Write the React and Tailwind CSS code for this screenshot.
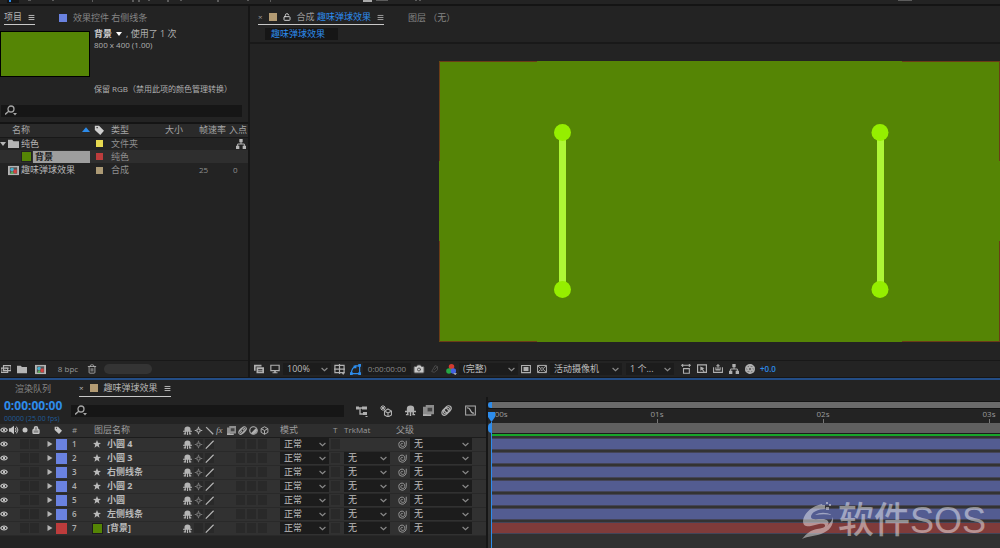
import { Camera, Aperture, Trash2, Lock, LockOpen } from "lucide-react";

const layers = [
    { id: 1, name: "小圆 4", type: "shape" },
    { id: 2, name: "小圆 3", type: "shape" },
    { id: 3, name: "右侧线条", type: "shape" },
    { id: 4, name: "小圆 2", type: "shape" },
    { id: 5, name: "小圆", type: "shape" },
    { id: 6, name: "左侧线条", type: "shape" },
    { id: 7, name: "[背景]", type: "solid" },
];

const glyphs = {
    eye: (
        <>
            <path d="M1 6c2-4 8-4 10 0-2 4-8 4-10 0z" fill="none" stroke="currentColor" strokeWidth="1.6" />
            <circle cx="6" cy="6" r="1.8" />
        </>
    ),
    speaker: (
        <>
            <path d="M0 4h2l4-3v10L2 8H0z" />
            <path d="M7.500 3.500q2 2.500 0 5M9 2q3.500 4 0 8" fill="none" stroke="currentColor" strokeWidth="1.200" />
        </>
    ),
    dot: <circle cx="6" cy="6" r="3" />,
    tag: <path fillRule="evenodd" d="M1 1h5l6 6-4.500 5L1 6zM3 2.500v1.500h1.500V2.500z" />,
    star: <path d="M6 0l1.700 4.200 4.300.2-3.400 2.700 1.200 4.400L6 9l-3.800 2.500 1.200-4.400L0 4.400l4.300-.2z" />,
    menu: <path d="M1 2.500h10M1 6h10M1 9.500h10" stroke="currentColor" strokeWidth="1.700" />,
    shy: (
        <>
            <path d="M2 6.500V4q0-3.500 4-3.500T10 4v2.500z" />
            <path d="M0 7h12M3 7v4M6 6v6M9 7v4M1 10.500h3M8 10.500h3" fill="none" stroke="currentColor" strokeWidth="1.600" />
        </>
    ),
    sun: (
        <>
            <circle cx="6" cy="6" r="2.300" fill="none" stroke="currentColor" strokeWidth="1.600" />
            <path d="M6 1v2M6 9v2M1 6h2M9 6h2" stroke="currentColor" strokeWidth="1.600" />
        </>
    ),
    slash: <path d="M1 11.500L11.500 1" stroke="currentColor" strokeWidth="1.700" />,
    backslash: <path d="M1.500 1.500L11 11" stroke="currentColor" strokeWidth="1.700" />,
    film: (
        <>
            <path d="M0 2h3v10H0zM3 0h9v10H4v2H3z" opacity=".75" />
            <path d="M5 3h5v4H5z" fill="#444" />
            <path d="M0 10h9v2H0z" />
        </>
    ),
    blur: (
        <g fill="none" stroke="currentColor" strokeWidth="1.300">
            <ellipse cx="4.500" cy="7.500" rx="3" ry="4" transform="rotate(45 4.500 7.500)" />
            <ellipse cx="6" cy="6" rx="3" ry="4" transform="rotate(45 6 6)" />
            <ellipse cx="7.500" cy="4.500" rx="3" ry="4" transform="rotate(45 7.500 4.500)" />
        </g>
    ),
    half: (
        <>
            <circle cx="6" cy="6" r="5" fill="none" stroke="currentColor" strokeWidth="1.500" />
            <path d="M9.500 2.500A5 5 0 0 1 2.500 9.500z" />
        </>
    ),
    cube: <path d="M6 1l4.500 2.500v5L6 11 1.500 8.500v-5zM1.500 3.500L6 6l4.500-2.500M6 6v5" fill="none" stroke="currentColor" strokeWidth="1.300" />,
    whip: <path d="M11 1v5c0 3-3 5-5.500 5A4.700 4.700 0 0 1 1 6c0-3 2-4.500 4.500-4.500S9 3.500 9 6 7.500 8.500 6 8.500 3.700 7.500 3.700 6 5 4.300 6.300 4.700" fill="none" stroke="currentColor" strokeWidth="1.300" />,
    search: (
        <>
            <circle cx="6" cy="4" r="3" fill="none" stroke="currentColor" strokeWidth="1.300" />
            <path d="M4 6L0 9.500" stroke="currentColor" strokeWidth="1.400" />
            <path d="M8 8h4l-2 2.500z" />
        </>
    ),
    folder: <path d="M0 2h4.500l1.500 1.500h6V11H0z" />,
    comp: (
        <>
            <path d="M0 1h12v10H0z" />
            <path d="M2 2.500h8v7H2z" fill="#555" />
            <circle cx="4.500" cy="5" r="2" fill="#44b0d0" />
            <path d="M6 5h3.500v4H6z" fill="#d34242" />
            <path d="M2.500 9.500l2-3 2 3z" fill="#59b659" />
        </>
    ),
    flow: (
        <>
            <path d="M4 0h4v4H4zM0 8h4v4H0zM8 8h4v4H8z" />
            <path d="M6 3v3M2 9V6h8v3" fill="none" stroke="currentColor" strokeWidth="1.200" />
        </>
    ),
    stack: <path fillRule="evenodd" d="M0 1h9v2H2v5H0zM3 4h9v7H3zM5 6v1h5V6zM5 8v1h5V8z" />,
    interpret: (
        <>
            <path d="M3 2h9v6H3z M0 5h8v5H0z" fill="none" stroke="currentColor" strokeWidth="1.400" />
            <path d="M5 4.500h5v1H5zM2 7h4v1H2z" />
        </>
    ),
    monitor: (
        <>
            <path d="M1 1.500h10V8H1z" fill="none" stroke="currentColor" strokeWidth="1.400" />
            <path d="M5 8h2v2h2v1H3v-1h2z" />
        </>
    ),
    grid: (
        <>
            <path d="M1 1.500h10v8H1zM6 0v11M0 5.500h12" fill="none" stroke="currentColor" strokeWidth="1.300" />
            <path d="M8 9h4l-2 3z" />
        </>
    ),
    mask: (
        <>
            <path d="M1.500 10.500q0-6 5-8.500h4v8.500z" fill="none" stroke="currentColor" strokeWidth="1.300" />
            <path d="M0 9h3v3H0zM9 9h3v3H9zM9 0h3v3H9zM4 1.500h3v3H4z" />
        </>
    ),
    ghost: <path d="M2 9l4-7 3 1v4l-4 3zM5 7l4-4" fill="none" stroke="currentColor" strokeWidth="1.200" />,
    rgb: (
        <>
            <circle cx="6" cy="3" r="3" fill="#d33b30" />
            <circle cx="3.200" cy="7.500" r="3" fill="#26a845" />
            <circle cx="8" cy="7.500" r="3" fill="#4463e0" />
            <path d="M8 10h4l-2 2z" fill="#ccc" />
        </>
    ),
    roi: (
        <>
            <path d="M.7 1.700h10.600v8.600H.7z" fill="none" stroke="currentColor" strokeWidth="1.300" />
            <path d="M3 3.500h6v5H3z" />
        </>
    ),
    checker: <path d="M.7 1.700h10.600v8.600H.7zM1 2l3 3M11 2L8 5M1 10l3-3M11 10L8 7M4 6l2-2 2 2-2 2z" fill="none" stroke="currentColor" strokeWidth="1.200" />,
    aspect: <path d="M0 1.500h12M2 0v3.500M10 0v3.500M3 5.500h7V11H3z" fill="none" stroke="currentColor" strokeWidth="1.300" />,
    fast: (
        <>
            <path d="M.7 1h10.600v9H.7z" fill="none" stroke="currentColor" strokeWidth="1.400" />
            <path d="M4 3l5 2-2 1 2 3-1 1-2-3-2 1z" />
        </>
    ),
    timeline: <path d="M.7 4v6h10.600V4M3 7h6M3.500 4v3M6 0v7M8.500 4v3M4 2h4" fill="none" stroke="currentColor" strokeWidth="1.300" />,
    mini: (
        <>
            <path d="M0 3h7M4 3v6h4" fill="none" stroke="currentColor" strokeWidth="1.300" />
            <path d="M0 1.500h3v3H0zM6 1.500h5v3H6zM7 7h4v3H7zM9 11h3l-1.500 1.500z" />
        </>
    ),
    draft: (
        <>
            <path d="M8 4l3.500 2v4L8 12l-3.500-2V6zM4.500 6L8 8l3.500-2M8 8v4" fill="none" stroke="currentColor" strokeWidth="1.100" />
            <path d="M3 0v6M0 3h6M1 1l4 4M5 1L1 5" stroke="currentColor" strokeWidth="1" />
        </>
    ),
    graph: (
        <>
            <path d="M.7 1h10.600v10H.7z" fill="none" stroke="currentColor" strokeWidth="1.100" />
            <path d="M2 3q3 0 4 3t4 3" fill="none" stroke="currentColor" strokeWidth="1.200" />
        </>
    ),
    down: <path d="M0 2h12L6 10z" />,
    right: <path d="M1 0l10 6-10 6z" />,
    up: <path d="M0 9l6-7 6 7z" />,
    chevron: <path d="M1 3.500L6 8l5-4.500" fill="none" stroke="currentColor" strokeWidth="2" />,
};

function Glyph({ name, className = "size-2.5" }) {
    return (
        <svg viewBox="0 0 12 12" fill="currentColor" aria-hidden="true" className={`block shrink-0 ${className}`}>
            {glyphs[name]}
        </svg>
    );
}

function IconButton({ label, className = "w-4", children }) {
    return (
        <button type="button" aria-label={label} className={`flex shrink-0 items-center justify-center ${className}`}>
            {children}
        </button>
    );
}

function Dropdown({ label, value, className = "w-12", pad = "pl-1" }) {
    return (
        <div className={`relative h-3 shrink-0 bg-[#1c1c1c] ${className}`}>
            <select
                aria-label={label}
                defaultValue={value}
                className={`block h-3 w-full appearance-none bg-transparent leading-3 text-[#bdbdbd] outline-none ${pad}`}
            >
                <option>{value}</option>
            </select>
            <Glyph name="chevron" className="pointer-events-none absolute top-[3px] right-[3px] size-[7px] text-[#8a8a8a]" />
        </div>
    );
}

function SearchBox({ label, className }) {
    return (
        <label className={`flex h-3 items-center bg-[#161616] pl-1 ${className}`}>
            <Glyph name="search" className="size-3 text-[#a5a5a5]" />
            <input type="text" aria-label={label} className="h-3 min-w-0 flex-1 bg-transparent px-1 outline-none" />
        </label>
    );
}

function TopStrip() {
    return (
        <div className="h-1.5 shrink-0 overflow-hidden border-b-2 border-[#141414] bg-[#232323]">
            <svg width="1000" height="4" aria-hidden="true" className="block">
                <path d="M7 0h12v3H7z" fill="#151515" />
                <path d="M9 0h2v2H9z" fill="#2d8ceb" />
                <path d="M28 0h3v1h-3zM52 0h2v1h-2zM92 0h1v2h-1zM132 0h2v2h-2zM138 0h2v2h-2zM148 0h2v1h-2zM167 0h2v2h-2zM180 0h2v1h-2zM217 0h2v2h-2zM247 0h2v1h-2zM270 0h1v2h-1zM376 0h12v1h-12zM415 0h2v1h-2zM419 0h2v1h-2zM898 0h14v1h-14z" fill="#5c5c5c" />
                <path d="M363 0h9v2h-9z" fill="#aaa" />
            </svg>
        </div>
    );
}

function ProjectPanel() {
    return (
        <section className="flex w-[248px] shrink-0 flex-col bg-[#232323]">
            <div className="flex h-[19px] gap-6 pl-1">
                <button type="button" className="flex items-center gap-1.5 border-b border-[#c8c8c8] pt-1 text-[#b5b5b5]">
                    项目
                    <Glyph name="menu" className="size-[7px]" />
                </button>
                <button type="button" className="flex items-center gap-1.5 pt-1 text-[#858585]">
                    <span className="size-2 bg-[#6a82e0]" />
                    效果控件 右侧线条
                </button>
            </div>
            <div className="flex h-20 gap-1">
                <div className="mt-1.5 h-[46px] w-[90px] border border-black bg-[#558505]" />
                <div className="flex flex-col pt-[3px] whitespace-nowrap text-[#b0b0b0]">
                    <p className="flex items-center gap-1 leading-3">
                        <b className="text-[#d0d0d0]">背景</b>
                        <Glyph name="down" className="size-1.5 text-white" />
                        <span>, 使用了 1 次</span>
                    </p>
                    <p className="text-[8px] leading-[10px]">800 x 400 (1.00)</p>
                    <p className="mt-auto pb-2.5 text-[8px] leading-3">保留 RGB（禁用此项的颜色管理转换）</p>
                </div>
            </div>
            <SearchBox label="搜索项目" className="mr-1.5 ml-px" />
            <table className="mt-[5px] w-full table-fixed border-t-2 border-[#141414] text-left whitespace-nowrap text-[#8f8f8f]">
                <colgroup>
                    <col className="w-[94px]" />
                    <col className="w-[17px]" />
                    <col className="w-[54px]" />
                    <col className="w-[34px]" />
                    <col className="w-[30px]" />
                    <col />
                </colgroup>
                <thead>
                    <tr className="h-3.5 border-b border-[#181818] bg-[#2a2a2a] text-[#a5a5a5]">
                        <th className="p-0 font-normal">
                            <div className="flex h-3 items-center justify-between pr-1 pl-3">
                                名称
                                <Glyph name="up" className="size-2 text-[#2d8ceb]" />
                            </div>
                        </th>
                        <th className="p-0" aria-label="标签"><Glyph name="tag" className="size-2.5 text-[#cfcfcf]" /></th>
                        <th className="p-0 font-normal">类型</th>
                        <th className="p-0 font-normal">大小</th>
                        <th className="p-0 font-normal">帧速率</th>
                        <th className="p-0 font-normal">入点</th>
                    </tr>
                </thead>
                <tbody>
                    <tr className="h-[13px]">
                        <td className="p-0">
                            <div className="flex h-3 items-center text-[#b5b5b5]">
                                <Glyph name="down" className="mr-0.5 size-1.5" />
                                <Glyph name="folder" className="mr-0.5 size-[11px]" />
                                纯色
                            </div>
                        </td>
                        <td className="p-0"><span className="ml-0.5 block size-[7px] bg-[#e6d850]" /></td>
                        <td className="p-0">文件夹</td>
                        <td />
                        <td />
                        <td className="p-0"><Glyph name="flow" className="ml-[7px] size-2.5 text-[#b5b5b5]" /></td>
                    </tr>
                    <tr className="h-[13px] bg-[#2e2e2e]">
                        <td className="p-0">
                            <div className="flex h-3 items-center gap-px pr-1 pl-[21px]">
                                <span className="size-[11px] border border-[#222] bg-[#558505]" />
                                <b className="h-3 flex-1 bg-[#9e9e9e] pl-0.5 leading-3 text-[#1a1a1a]">背景</b>
                            </div>
                        </td>
                        <td className="p-0"><span className="ml-0.5 block size-[7px] bg-[#bd3c3c]" /></td>
                        <td className="p-0">纯色</td>
                        <td colSpan="3" />
                    </tr>
                    <tr className="h-3.5">
                        <td className="p-0">
                            <div className="flex h-3 items-center gap-0.5 pl-2 text-[#b5b5b5]">
                                <Glyph name="comp" className="size-[11px]" />
                                趣味弹球效果
                            </div>
                        </td>
                        <td className="p-0"><span className="ml-0.5 block size-[7px] bg-[#ac9a75]" /></td>
                        <td className="p-0">合成</td>
                        <td />
                        <td className="p-0 text-[8px]">25</td>
                        <td className="p-0 pl-1 text-[8px]">0</td>
                    </tr>
                </tbody>
            </table>
            <div className="mt-auto flex h-[17px] items-center border-t border-[#181818] text-[#b5b5b5]">
                <IconButton label="解释素材" className="w-3"><Glyph name="interpret" /></IconButton>
                <IconButton label="新建文件夹" className="w-5"><Glyph name="folder" /></IconButton>
                <IconButton label="新建合成" className="w-4"><Glyph name="comp" className="size-[11px]" /></IconButton>
                <button type="button" className="w-9 pl-1 text-[8px] text-[#999]">8 bpc</button>
                <IconButton label="删除"><Trash2 className="size-2.5" /></IconButton>
                <span className="ml-1 h-2.5 w-12 rounded-full bg-[#343434]" />
            </div>
        </section>
    );
}

function Artwork() {
    return (
        <svg viewBox="0 0 561 281" role="img" aria-label="趣味弹球效果" className="block w-full">
            <path d="M0 0h561v281H0z" fill="#558505" />
            <path d="M.5 100V.5H98M463 .5h98M.5 180v100.500H98M463 280.500h98M560.500 0v100M560.500 180v101" fill="none" stroke="#6b3c17" />
            <path d="M120 72h7v156h-7zM438 72h7v156h-7z" fill="#aef636" />
            <g fill="#95ee00">
                <circle cx="123.500" cy="71.500" r="8.500" />
                <circle cx="123.500" cy="228.500" r="8.500" />
                <circle cx="441" cy="71.500" r="8.500" />
                <circle cx="441" cy="228.500" r="8.500" />
            </g>
        </svg>
    );
}

function CompositionPanel() {
    return (
        <section className="flex min-w-0 flex-1 flex-col bg-[#232323]">
            <div className="flex h-[19px] items-stretch gap-6 pl-2">
                <button type="button" className="flex items-center gap-1.5 border-b border-[#c8c8c8] pt-1 text-[#9a9a9a]">
                    <span className="text-[8px]">×</span>
                    <span className="size-2 bg-[#b39b73]" />
                    <LockOpen strokeWidth={3} className="size-2 text-[#cfcfcf]" />
                    <span>合成 <span className="text-[#2d8ceb]">趣味弹球效果</span></span>
                    <Glyph name="menu" className="size-[7px]" />
                </button>
                <button type="button" className="pt-1 text-[#858585]">图层 （无）</button>
            </div>
            <div className="flex h-[19px] items-center border-b-2 border-[#191919] pl-[15px]">
                <button type="button" className="h-3 w-[73px] bg-[#161616] pl-1.5 text-left leading-3 text-[#2d8ceb]">趣味弹球效果</button>
            </div>
            <div className="flex-1 overflow-hidden pt-[17px] pb-[18px] pl-[189px]">
                <Artwork />
            </div>
            <div className="flex h-[17px] shrink-0 items-center overflow-hidden border-t border-[#181818] pl-px text-[#b0b0b0]">
                <IconButton label="始终预览"><Glyph name="stack" /></IconButton>
                <IconButton label="主查看器"><Glyph name="monitor" /></IconButton>
                <Dropdown label="缩放" value="100%" />
                <IconButton label="网格"><Glyph name="grid" className="size-[11px]" /></IconButton>
                <IconButton label="蒙版"><Glyph name="mask" className="size-[11px] text-[#2d8ceb]" /></IconButton>
                <button type="button" className="h-3 w-12 bg-[#1c1c1c] text-[8px] leading-3 text-[#8a8a8a]">0:00:00:00</button>
                <IconButton label="快照"><Camera className="size-3 fill-[#c8c8c8] text-[#555]" /></IconButton>
                <IconButton label="显示快照"><Glyph name="ghost" className="size-2.5 text-[#484848]" /></IconButton>
                <IconButton label="通道"><Glyph name="rgb" className="size-[11px]" /></IconButton>
                <Dropdown label="分辨率" value="(完整)" className="w-[59px]" />
                <IconButton label="目标区域"><Glyph name="roi" /></IconButton>
                <IconButton label="透明网格"><Glyph name="checker" /></IconButton>
                <Dropdown label="3D 视图" value="活动摄像机" className="w-[72px]" />
                <Dropdown label="视图布局" value="1 个..." className="ml-1 w-12" />
                <IconButton label="像素长宽比" className="ml-1 w-4"><Glyph name="aspect" /></IconButton>
                <IconButton label="快速预览"><Glyph name="fast" /></IconButton>
                <IconButton label="时间轴"><Glyph name="timeline" /></IconButton>
                <IconButton label="流程图"><Glyph name="flow" /></IconButton>
                <IconButton label="重置曝光度"><Aperture strokeWidth={4} className="size-2.5" /></IconButton>
                <button type="button" className="pl-0.5 text-[8px] font-semibold text-[#2d8ceb]">+0.0</button>
            </div>
        </section>
    );
}

function Cell({ icon, className = "" }) {
    return (
        <span className={`flex h-2.5 w-[9px] shrink-0 items-center justify-center bg-[#292929] ${className}`}>
            {icon && <Glyph name={icon} className="size-[9px]" />}
        </span>
    );
}

function LayerRow({ layer }) {
    const solid = layer.type === "solid";
    return (
        <tr className="h-3.5 border-b border-[#292929] bg-[#313131]">
            <td className="p-0">
                <div className="flex items-center gap-px">
                    <IconButton label={`显示 ${layer.name}`} className="w-2"><Glyph name="eye" className="size-2 text-[#c8c8c8]" /></IconButton>
                    <span className="w-2.5" />
                    <Cell />
                    <Cell />
                </div>
            </td>
            <td className="p-0"><Glyph name="right" className="mx-auto size-1.5 text-[#b5b5b5]" /></td>
            <td className="p-0"><span className={`mx-auto block size-[11px] ${solid ? "bg-[#bd3c3c]" : "bg-[#6a82e0]"}`} /></td>
            <td className="p-0 pl-1 text-[8px] font-semibold text-[#b0b0b0]">{layer.id}</td>
            <td className="p-0">
                <div className="flex items-center gap-1 font-bold text-[#bababa]">
                    <span className="flex w-[15px] justify-end">
                        {solid ? <span className="size-[11px] border border-[#1c1c1c] bg-[#558505]" /> : <Glyph name="star" className="mr-0.5 size-2" />}
                    </span>
                    {layer.name}
                </div>
            </td>
            <td className="p-0">
                <div className="flex gap-0.5 text-[#b5b5b5]">
                    <Cell icon="shy" className="bg-transparent" />
                    <Cell icon={solid ? null : "sun"} className={solid ? "" : "text-[#777]"} />
                    <Cell icon="slash" />
                    <span className="w-[18px]" />
                    <Cell />
                    <Cell />
                    <Cell />
                </div>
            </td>
            <td className="p-0"><Dropdown label={`模式 ${layer.id}`} value="正常" className="mx-0.5" /></td>
            <td className="p-0"><Cell /></td>
            <td className="p-0">{layer.id > 1 && <Dropdown label={`轨道遮罩 ${layer.id}`} value="无" className="w-[46px]" />}</td>
            <td className="p-0">
                <div className="flex items-center gap-0.5 pl-1">
                    <IconButton label={`父级关联器 ${layer.id}`} className="w-3"><Glyph name="whip" className="size-[9px] text-[#959595]" /></IconButton>
                    <Dropdown label={`父级 ${layer.id}`} value="无" className="w-[62px]" />
                </div>
            </td>
        </tr>
    );
}

function LayerTable() {
    return (
        <table className="w-full table-fixed text-left whitespace-nowrap">
            <colgroup>
                <col className="w-[45px]" />
                <col className="w-[9px]" />
                <col className="w-[14px]" />
                <col className="w-5" />
                <col className="w-[95px]" />
                <col className="w-[95px]" />
                <col className="w-[53px]" />
                <col className="w-[13px]" />
                <col className="w-12" />
                <col />
            </colgroup>
            <thead>
                <tr className="h-[13px] border-b border-[#1c1c1c] bg-[#2e2e2e] text-[#9c9c9c]">
                    <th className="p-0" aria-label="A/V 功能">
                        <div className="flex items-center gap-px text-[#c5c5c5]">
                            <Glyph name="eye" className="size-2" />
                            <Glyph name="speaker" className="size-2.5" />
                            <Glyph name="dot" className="size-2.5" />
                            <Lock strokeWidth={4} className="ml-px size-2 fill-[#888]" />
                        </div>
                    </th>
                    <th className="p-0" aria-label="展开" />
                    <th className="p-0" aria-label="标签"><Glyph name="tag" className="size-2 text-[#c5c5c5]" /></th>
                    <th className="p-0 pl-1 text-[8px] font-normal">#</th>
                    <th className="p-0 pl-1.5 font-normal">图层名称</th>
                    <th className="p-0 font-normal">
                        <div className="flex items-center gap-0.5 text-[#b0b0b0]">
                            <Glyph name="shy" className="size-[9px]" />
                            <Glyph name="sun" className="size-[9px]" />
                            <Glyph name="backslash" className="size-[9px]" />
                            <i className="w-[9px] font-['Liberation_Serif',serif] leading-3">fx</i>
                            <Glyph name="film" className="size-[9px]" />
                            <Glyph name="blur" className="size-[9px]" />
                            <Glyph name="half" className="size-[9px]" />
                            <Glyph name="cube" className="size-[9px]" />
                        </div>
                    </th>
                    <th className="p-0 pl-0.5 font-normal">模式</th>
                    <th className="p-0 pl-0.5 text-[8px] font-normal">T</th>
                    <th className="p-0 text-[8px] font-normal">TrkMat</th>
                    <th className="p-0 pl-1 font-normal">父级</th>
                </tr>
            </thead>
            <tbody>
                {layers.map((layer) => (
                    <LayerRow key={layer.id} layer={layer} />
                ))}
            </tbody>
        </table>
    );
}

function Tracks() {
    return (
        <div className="relative flex min-w-0 flex-1 flex-col overflow-hidden border-l-2 border-[#161616] bg-[#313131]">
            <div className="h-1 bg-[#232323]" />
            <div className="flex h-2 items-stretch border-y border-[#141414]">
                <span className="w-1 rounded-l-full bg-[#2d8ceb]" />
                <span className="flex-1 bg-[#6a6a6a]" />
            </div>
            <div className="flex h-3.5 overflow-hidden bg-[#232323] text-[8px] text-[#9c9c9c]">
                <span className="w-[86px] shrink-0 leading-[10px]">0:00s</span>
                {["01s", "02s", "03s"].map((mark) => (
                    <span key={mark} className="flex w-[166px] shrink-0 flex-col items-center leading-[10px]">
                        {mark}
                        <span className="h-1 w-px bg-[#777]" />
                    </span>
                ))}
            </div>
            <div className="flex h-2.5 items-stretch">
                <span className="w-1 rounded-l-full bg-[#2d8ceb]" />
                <span className="flex-1 bg-[#606060]" />
            </div>
            <div className="flex flex-col gap-0.5 bg-[#333] pl-[3px]">
                <div className="h-[3px] border-t border-[#1c1c1c] bg-[#17a62a]" />
                {layers.map((layer) => (
                    <div
                        key={layer.id}
                        className={`h-3 border-y border-[#444457] ${layer.type === "solid" ? "bg-[#7f3b3a]" : "bg-[#535c91]"}`}
                    />
                ))}
            </div>
            <div className="absolute top-[15px] bottom-0 left-0 flex w-[7px] flex-col items-center text-[#2d8ceb]">
                <svg viewBox="0 0 7 10" aria-hidden="true" className="block h-2.5 w-[7px] shrink-0">
                    <path d="M0 0h7v5L3.500 10 0 5z" fill="currentColor" />
                </svg>
                <span className="w-px flex-1 bg-[#2d8ceb]" />
            </div>
        </div>
    );
}

function Watermark() {
    return (
        <div className="pointer-events-none absolute right-3.5 bottom-2 flex items-center gap-1 opacity-45">
            <svg viewBox="0 0 32 38" aria-hidden="true" className="h-[38px] w-8">
                <path
                    d="M20 2C10 4 2 11 1 19c0 5 4 6 8 5l8-2c6-1 8 1 4 5 8-4 7-10-1-10-6 0-11 1-11-2 0-5 7-8 15-8l-3-2z"
                    fill="#fff"
                />
                <path d="M31 15c1 9-4 14-12 17-6 2-13 2-19 5 5-6 9-9 15-10 9-1 14-5 16-12z" fill="#fff" />
                <path d="M13 13c5-3 11-3 17 0-5-1-11-1-17 0z" fill="#fff" />
                <path d="M20 3h3v3h-3zM24 5h3v3h-3zM24 0h2v2h-2zM27 2h2v2h-2z" fill="#fff" />
            </svg>
            <span className="font-['Liberation_Sans','Noto_Sans_CJK_SC',sans-serif] text-[36px] leading-[38px] font-medium text-white">
                软件SOS
            </span>
        </div>
    );
}

function TimelinePanel() {
    return (
        <section className="relative flex flex-1 flex-col border-t-2 border-[#234d86] bg-[#232323]">
            <div className="flex h-[17px] items-stretch gap-7 pl-[15px]">
                <button type="button" className="text-[#858585]">渲染队列</button>
                <button type="button" className="flex items-center gap-1.5 border-b border-[#c8c8c8] text-[#b5b5b5]">
                    <span className="text-[8px]">×</span>
                    <span className="size-2 bg-[#b39b73]" />
                    趣味弹球效果
                    <Glyph name="menu" className="size-[7px]" />
                </button>
            </div>
            <div className="flex flex-1">
                <div className="w-[486px] shrink-0">
                    <div className="flex h-[27px] items-center pl-1">
                        <div className="w-[67px] text-[#2d8ceb]">
                            <p className="text-[12px] leading-4 font-bold">0:00:00:00</p>
                            <p className="text-[7px] leading-[10px] text-[#1f5a96]">00000 (25.00 fps)</p>
                        </div>
                        <SearchBox label="搜索图层" className="w-[273px]" />
                        <div className="ml-2.5 flex flex-1 items-center text-[#b0b0b0]">
                            <IconButton label="合成微型流程图"><Glyph name="mini" className="size-3" /></IconButton>
                            <IconButton label="草图 3D" className="ml-2 w-4"><Glyph name="draft" className="size-3" /></IconButton>
                            <IconButton label="隐藏图层" className="ml-2 w-4"><Glyph name="shy" className="size-[11px]" /></IconButton>
                            <IconButton label="帧混合" className="ml-0.5 w-4"><Glyph name="film" className="size-[11px]" /></IconButton>
                            <IconButton label="运动模糊" className="ml-0.5 w-4"><Glyph name="blur" className="size-[11px]" /></IconButton>
                            <IconButton label="图表编辑器" className="ml-2 w-4"><Glyph name="graph" className="size-[11px]" /></IconButton>
                        </div>
                    </div>
                    <LayerTable />
                </div>
                <Tracks />
            </div>
            <Watermark />
        </section>
    );
}

export default function App() {
    return (
        <main className="flex min-h-screen flex-col bg-[#161616] font-['Open_Sans','Noto_Sans_CJK_SC',sans-serif] text-[9px] leading-3">
            <TopStrip />
            <div className="mb-px flex gap-0.5">
                <ProjectPanel />
                <CompositionPanel />
            </div>
            <TimelinePanel />
        </main>
    );
}
